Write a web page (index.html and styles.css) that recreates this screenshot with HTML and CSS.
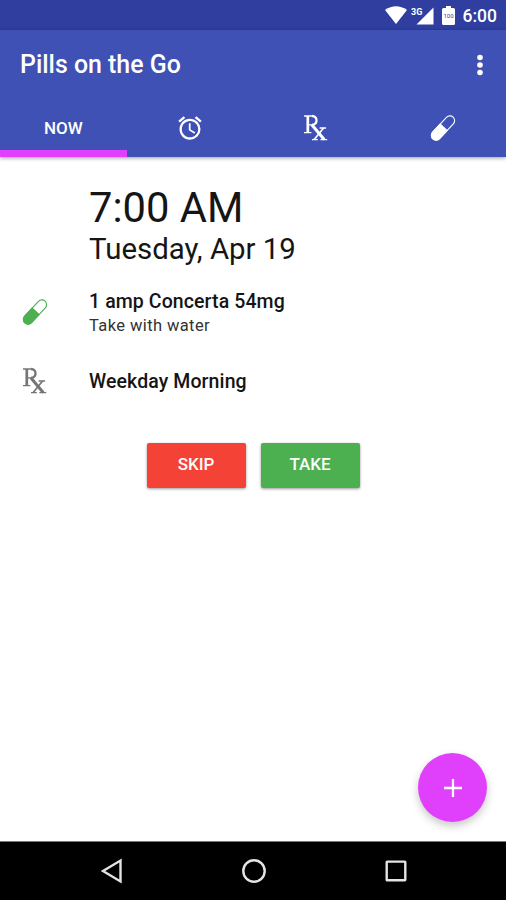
FILE: index.html
```html
<!DOCTYPE html>
<html lang="en">
<head>
<meta charset="utf-8">
<title>Pills on the Go</title>
<link rel="stylesheet" href="styles.css">
</head>
<body>
<svg class="defs" width="0" height="0" aria-hidden="true">
  <symbol id="pill" viewBox="0 0 28 28">
    <g transform="rotate(43 14 14)">
      <rect x="9.300" y="-.8" width="9.400" height="29.600" rx="4.700" fill="none" stroke="currentColor" stroke-width="1.100"/>
      <path d="M8.700 12.500h10.600v11.600a5.300 5.300 0 0 1-10.600 0z" fill="currentColor"/>
    </g>
  </symbol>
  <symbol id="rx" viewBox="0 0 28 28">
    <g fill="none" stroke="currentColor">
      <path d="M5.800 2v16.500" stroke-width="2.700"/>
      <path d="M2 2h8.500M2 18.600h7.400M6 10.900h4.500M17.600 14h6.500M10 25.600h5.800M18.400 25.600h6.800" stroke-width="1.400"/>
      <path d="M10 2c6 0 6 8.800 0 8.800" stroke-width="2.300"/>
      <path d="M9.800 10.800L22.200 25.500" stroke-width="3"/>
      <path d="M21.600 14L12.200 25.500" stroke-width="1.700"/>
    </g>
  </symbol>
</svg>
<div class="screen">
  <header class="status">
    <svg class="wifi" viewBox="0 0 22 18"><path d="M0 4Q11-3.500 22 4L11 18z" fill="#fff"/></svg>
    <svg class="signal" viewBox="0 0 23 19"><path d="M22.500 1.500V18.500H5.500z" fill="#fff"/><text x="0" y="8.500" class="network">3G</text></svg>
    <svg class="battery" viewBox="0 0 13 19"><path d="M4 0h5v2h2.500q1.500 0 1.500 1.500v14q0 1.500-1.500 1.500h-10Q0 19 0 17.500v-14Q0 2 1.500 2H4z" fill="#fff"/><text x="6.500" y="11.500" text-anchor="middle" class="charge">100</text></svg>
    <span class="clock">6:00</span>
  </header>
  <div class="appbar">
    <div class="toolbar">
      <h1 class="title">Pills on the Go</h1>
      <svg class="more" viewBox="0 0 6 22" fill="#fff"><circle cx="3" cy="3.500" r="2.800"/><circle cx="3" cy="11" r="2.800"/><circle cx="3" cy="18.500" r="2.800"/></svg>
    </div>
    <nav class="tabs">
      <div class="tab active"><span class="now">NOW</span></div>
      <div class="tab"><svg class="icon" viewBox="0 0 24 24" fill="#fff"><path d="M22 5.720l-4.600-3.860-1.290 1.530 4.600 3.860L22 5.720zM7.880 3.390L6.600 1.860 2 5.710l1.290 1.530 4.590-3.850zM12.500 8H11v6l4.750 2.850.75-1.230-4-2.370V8zM12 4c-4.970 0-9 4.030-9 9s4.020 9 9 9a9 9 0 0 0 0-18zm0 16c-3.870 0-7-3.130-7-7s3.130-7 7-7 7 3.130 7 7-3.130 7-7 7z"/></svg></div>
      <div class="tab"><svg class="icon"><use href="#rx"/></svg></div>
      <div class="tab"><svg class="icon"><use href="#pill"/></svg></div>
    </nav>
  </div>
  <main class="content">
    <div class="time">7:00 AM</div>
    <div class="date">Tuesday, Apr 19</div>
    <div class="row medicine">
      <svg class="icon green"><use href="#pill"/></svg>
      <div>
        <div class="name">1 amp Concerta 54mg</div>
        <div class="note">Take with water</div>
      </div>
    </div>
    <div class="row schedule">
      <svg class="icon gray"><use href="#rx"/></svg>
      <div class="name">Weekday Morning</div>
    </div>
    <div class="actions">
      <button class="btn skip">SKIP</button>
      <button class="btn take">TAKE</button>
    </div>
    <button class="fab" aria-label="Add"><svg viewBox="0 0 20 20"><path d="M10 1v18M1 10h18" stroke="#fff" stroke-width="2.300"/></svg></button>
  </main>
  <footer class="navbar">
    <svg viewBox="0 0 24 26"><path d="M3 13L20.500 2.500v21z"/></svg>
    <svg viewBox="0 0 24 26"><circle cx="12" cy="13" r="10.700"/></svg>
    <svg viewBox="0 0 24 26"><rect x="2.700" y="3.600" width="18.600" height="18.600" rx=".5"/></svg>
  </footer>
</div>
</body>
</html>
```
FILE: styles.css
```css
* { box-sizing: border-box; }
body { margin: 0; font-family: Roboto, sans-serif; color: #151515; background: #fff; }
.defs { position: absolute; }
.screen { width: 506px; height: 900px; display: flex; flex-direction: column; overflow: hidden; }
.status { height: 30px; background: #303f9f; display: flex; align-items: center; justify-content: flex-end; padding-right: 9px; color: #fff; }
.wifi { width: 22px; height: 18px; margin-right: 4px; }
.signal { width: 23px; height: 19px; margin-right: 8px; }
.battery { width: 13px; height: 19px; margin-right: 8px; }
.network { font-size: 9px; font-weight: 700; fill: #fff; }
.charge { font-size: 6px; fill: #303f9f; }
.clock { font-size: 17.500px; font-weight: 500; line-height: 30px; padding-top: 2px; }
.appbar { height: 127px; background: #3f51b5; color: #fff; box-shadow: 0 1px 4px rgba(0,0,0,.4); flex: none; }
.toolbar { height: 69px; display: flex; align-items: center; justify-content: space-between; padding: 0 23px 0 20px; }
.title { margin: 0; font-size: 24.900px; font-weight: 500; line-height: 30px; }
.more { width: 6px; height: 22px; }
.tabs { height: 58px; display: grid; grid-template-columns: repeat(4, 1fr); }
.tab { display: flex; align-items: center; justify-content: center; border-bottom: 7px solid transparent; padding-top: 6px; }
.tab.active { border-color: #e040fb; }
.now { font-size: 17px; font-weight: 500; }
.icon { width: 28px; height: 28px; flex: none; }
.green { color: #4caf50; }
.gray { color: #757575; }
.content { flex: 1; position: relative; padding: 28px 0 0; }
.time { padding-left: 89px; font-size: 41.700px; line-height: 46px; height: 45px; }
.date { padding-left: 89px; font-size: 29.400px; line-height: 38px; height: 38px; }
.row { display: flex; align-items: center; padding-left: 21px; gap: 40px; }
.row .icon { margin-bottom: 2px; }
.medicine { height: 48px; margin-top: 21px; }
.name { font-size: 19.500px; font-weight: 500; line-height: 24px; letter-spacing: .1px; }
.note { font-size: 16.500px; line-height: 23px; letter-spacing: .4px; color: #333; }
.schedule { height: 30px; margin-top: 30px; }
.actions { display: flex; justify-content: center; gap: 15px; margin-top: 46px; }
.btn { width: 99px; height: 45px; border: 0; border-radius: 2px; color: #fff; font: 500 17px/20px Roboto, sans-serif; padding: 0 0 4px; box-shadow: 0 1px 3px rgba(0,0,0,.4); }
.skip { background: #f44336; }
.take { background: #4caf50; }
.fab { position: absolute; right: 19px; bottom: 19px; width: 69px; height: 69px; border: 0; border-radius: 50%; padding: 0; background: #e040fb; display: flex; align-items: center; justify-content: center; box-shadow: 0 4px 8px rgba(0,0,0,.22); }
.fab svg { width: 20px; height: 20px; }
.navbar { height: 59px; background: #000; border-top: 1px solid #777; display: flex; justify-content: center; gap: 118px; align-items: center; flex: none; padding-left: 1px; }
.navbar svg { width: 24px; height: 26px; fill: none; stroke: #e4e4e4; stroke-width: 2.400; }
```
